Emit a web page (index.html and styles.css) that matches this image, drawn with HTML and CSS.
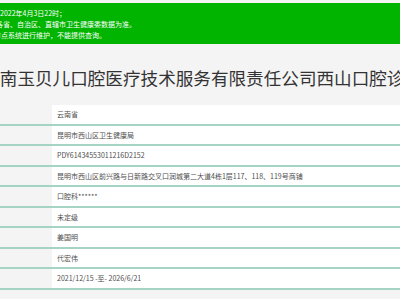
FILE: index.html
```html
<!DOCTYPE html>
<html lang="zh">
<head>
<meta charset="utf-8">
<title>诊所信息</title>
<link rel="stylesheet" href="styles.css">
</head>
<body>
<div class="notice">
  <p class="l1">2022年4月3日22时；</p>
  <p class="l2">各省、自治区、直辖市卫生健康委数据为准。</p>
  <p class="l3">节点系统进行维护，不能提供查询。</p>
</div>
<div class="title-wrap"><h1 class="title">云南玉贝儿口腔医疗技术服务有限责任公司西山口腔诊所</h1></div>
<div class="table">
  <div class="row"><div class="label"></div><div class="value">云南省</div></div>
  <div class="row"><div class="label"></div><div class="value">昆明市西山区卫生健康局</div></div>
  <div class="row"><div class="label"></div><div class="value">PDY61434553011216D2152</div></div>
  <div class="row"><div class="label"></div><div class="value">昆明市西山区前兴路与日新路交叉口润城第二大道4栋1层117、118、119号商铺</div></div>
  <div class="row"><div class="label"></div><div class="value">口腔科******</div></div>
  <div class="row"><div class="label"></div><div class="value">未定级</div></div>
  <div class="row"><div class="label"></div><div class="value">姜国明</div></div>
  <div class="row"><div class="label"></div><div class="value">代宏伟</div></div>
  <div class="row"><div class="label"></div><div class="value">2021/12/15 -至- 2026/6/21</div></div>
</div>
</body>
</html>
```
FILE: styles.css
```css
html, body {
  margin: 0;
  padding: 0;
  background: #f4f4f4;
  font-family: "Noto Sans CJK SC", "Noto Sans", sans-serif;
  overflow: hidden;
}
.notice {
  margin-top: 3px;
  height: 41px;
  box-sizing: border-box;
  padding: 5px 0 3px 0;
  background: #00b400;
  color: #ffffff;
  font-size: 7px;
  line-height: 11px;
  overflow: hidden;
  white-space: nowrap;
}
.notice p {
  margin: 0;
}
.notice .l1 { margin-left: 0; }
.notice .l2 { margin-left: -4px; }
.notice .l3 { margin-left: -6px; }
.title-wrap {
  margin-top: 22px;
  overflow: hidden;
  white-space: nowrap;
}
.title {
  margin: 0 0 0 -17.8px;
  font-size: 17.6px;
  line-height: 24px;
  font-weight: normal;
  color: #333333;
}
.table {
  margin-top: 15px;
}
.row {
  display: flex;
  height: 18.5px;
  border-bottom: 2px solid #a6d4c4;
}
.label {
  width: 52px;
  flex: none;
}
.value {
  flex: 1;
  background: #ffffff;
  padding-left: 5px;
  font-size: 7px;
  line-height: 18.5px;
  color: #4d4d4d;
  white-space: nowrap;
  overflow: hidden;
}
```
